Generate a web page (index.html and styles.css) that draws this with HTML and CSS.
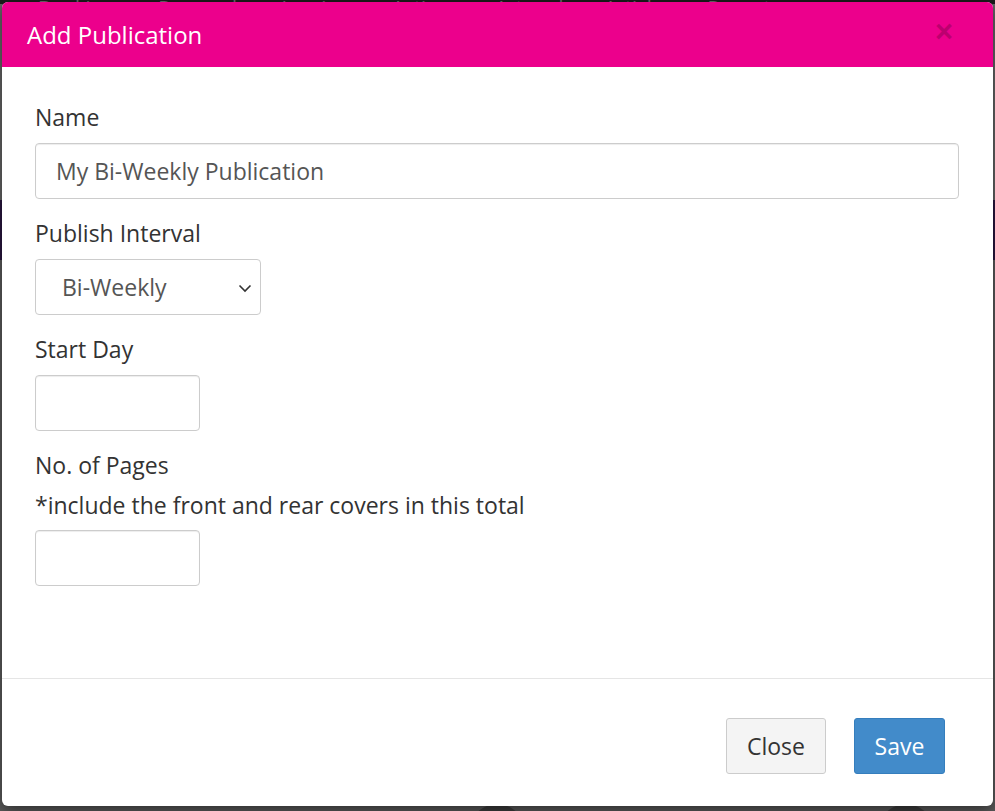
FILE: index.html
```html
<!DOCTYPE html>
<html>
<head>
<meta charset="utf-8">
<title>Add Publication</title>
<link rel="stylesheet" href="styles.css">
</head>
<body>
<div class="backdrop-page">
  <nav class="bg-nav">
    <span>Bookings</span><span>Renewals</span><span>Invoices</span><span>Actions</span><span>Artwork</span><span>Articles</span><span>Reports</span>
  </nav>
  <div class="bg-gap"></div>
  <div class="bg-band"></div>
  <div class="bg-rest">
    <span class="bg-circle c1"></span>
    <span class="bg-circle c2"></span>
  </div>
</div>

<div class="modal">
  <div class="modal-header">
    <h4 class="modal-title">Add Publication</h4>
    <button class="close" type="button">&times;</button>
  </div>
  <div class="modal-body">
    <div class="form-group">
      <label class="form-label">Name</label>
      <input class="form-control" type="text" value="My Bi-Weekly Publication">
    </div>
    <div class="form-group">
      <label class="form-label">Publish Interval</label>
      <div class="select-wrap">
        <select class="form-control select">
          <option>Bi-Weekly</option>
          <option>Weekly</option>
          <option>Monthly</option>
        </select>
        <svg class="chevron" width="14" height="9" viewBox="0 0 14 9"><path d="M1.5 1.5 L7 7 L12.5 1.5" fill="none" stroke="#333" stroke-width="1.6"/></svg>
      </div>
    </div>
    <div class="form-group">
      <label class="form-label">Start Day</label>
      <input class="form-control short" type="text">
    </div>
    <div class="form-group last">
      <label class="form-label">No. of Pages</label>
      <p class="help">*include the front and rear covers in this total</p>
      <input class="form-control short" type="text">
    </div>
  </div>
  <div class="modal-footer">
    <button class="btn btn-default" type="button">Close</button>
    <button class="btn btn-primary" type="button">Save</button>
  </div>
</div>
</body>
</html>
```
FILE: styles.css
```css
* { box-sizing: border-box; }
html, body { margin: 0; padding: 0; }
body {
  width: 995px;
  height: 811px;
  overflow: hidden;
  background: #666;
  font-family: "Open Sans", "Liberation Sans", sans-serif;
  position: relative;
}

/* page behind the modal, dimmed */
.backdrop-page { display: flex; flex-direction: column; height: 811px; overflow: hidden; }
.bg-nav {
  height: 4px;
  flex: none;
  background: #1b1b1b;
  color: #6a6a6a;
  font-size: 20px;
  line-height: 20px;
  display: flex;
  gap: 35px;
  padding-left: 38px;
  overflow: hidden;
  align-items: flex-end;
}
.bg-nav span { margin-bottom: -14px; }
.bg-gap { height: 196px; flex: none; background: #666; }
.bg-band { height: 60px; flex: none; background: #2a1640; }
.bg-rest { flex: 1; background: #5c5c5c; position: relative; overflow: hidden; }
.bg-circle {
  position: absolute;
  width: 56px; height: 56px;
  border-radius: 50%;
  background: #3e3e3e;
  top: 544px;
}
.bg-circle.c1 { left: 469px; }
.bg-circle.c2 { left: 878px; }

/* modal */
.modal {
  position: absolute;
  left: 2px;
  top: 2px;
  width: 991px;
  height: 804px;
  background: #fff;
  border-radius: 6px;
  overflow: hidden;
  box-shadow: 0 5px 15px rgba(0,0,0,.5);
  display: flex;
  flex-direction: column;
}
.modal-header {
  height: 65px;
  flex: none;
  background: #ec008c;
  display: flex;
  align-items: center;
  justify-content: space-between;
  padding: 0 40px 0 25px;
}
.modal-title {
  margin: 0;
  color: #fff;
  font-weight: 400;
  font-size: 24px;
  line-height: 30px;
}
.close {
  border: 0;
  background: transparent;
  padding: 0;
  margin-top: -6px;
  font-family: "Liberation Sans", "Open Sans", sans-serif;
  font-size: 31px;
  font-weight: 700;
  line-height: 1;
  color: #000;
  opacity: .2;
}

.modal-body {
  flex: none;
  padding: 36px 34px 92px 33px;
  border-bottom: 1px solid #e5e5e5;
}
.form-group { margin-bottom: 20px; }
.form-group.last { margin-bottom: 0; }
.form-label {
  display: block;
  color: #333;
  font-size: 23px;
  line-height: 28px;
  margin-bottom: 12px;
}
.help {
  margin: 0 0 11px;
  color: #333;
  font-size: 23px;
  line-height: 28px;
}
.form-control {
  display: block;
  width: 100%;
  height: 56px;
  padding: 0 20px;
  border: 1px solid #ccc;
  border-radius: 4px;
  background: #fff;
  color: #555;
  font-family: "Open Sans", "Liberation Sans", sans-serif;
  font-size: 23px;
  box-shadow: inset 0 1px 1px rgba(0,0,0,.075);
  outline: none;
}
.form-control.short { width: 165px; }
.select-wrap { position: relative; width: 226px; }
.select {
  -webkit-appearance: none;
  appearance: none;
  padding-left: 26px;
  box-shadow: none;
}
.chevron {
  position: absolute;
  left: 203px;
  top: 25px;
  pointer-events: none;
}

.modal-footer {
  flex: 1;
  display: flex;
  justify-content: flex-end;
  align-items: flex-start;
  gap: 28px;
  padding: 39px 48px 0 0;
}
.btn {
  height: 56px;
  padding: 0;
  border-radius: 3px;
  font-family: "Open Sans", "Liberation Sans", sans-serif;
  font-size: 23px;
  line-height: 1;
  border: 1px solid transparent;
}
.btn-default {
  background: #f4f4f4;
  border-color: #ccc;
  color: #333;
  width: 100px;
}
.btn-primary {
  background: #428bca;
  border-color: #357ebd;
  color: #fff;
  width: 91px;
}
```
